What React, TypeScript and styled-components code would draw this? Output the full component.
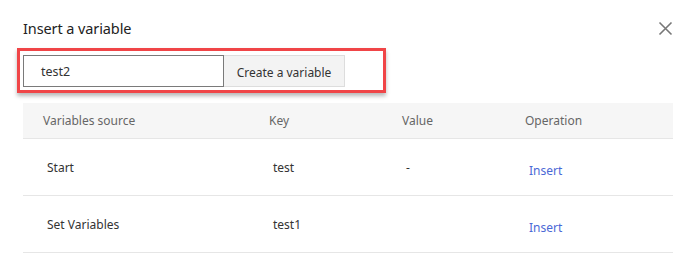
import * as React from 'react'
import styled, { createGlobalStyle } from 'styled-components'

const GlobalStyle = createGlobalStyle`
    html, body {
        margin: 0;
        padding: 0;
        background: #ffffff;
    }
    body {
        font-family: "Noto Sans", "Liberation Sans", sans-serif;
        color: #333;
    }
`

let Dialog = styled.div`
    width: 695px;
    height: 268px;
    box-sizing: border-box;
    padding: 15px 22px 0 23px;
    background: #fff;
`

let Header = styled.div`
    display: flex;
    align-items: center;
    justify-content: space-between;
    height: 26px;
`

let Title = styled.div`
    font-size: 14.5px;
    color: #222;
    letter-spacing: -0.1px;
`

let CloseButton = styled.div`
    width: 20px;
    height: 20px;
    display: flex;
    align-items: center;
    justify-content: center;
    margin-right: -2px;
`

let Highlight = styled.div`
    display: inline-flex;
    margin: 7px 0 0 -6px;
    padding: 4px 38px 3px 3px;
    border: 3px solid #f04547;
    box-shadow: 0 3px 4px rgba(0, 0, 0, 0.28);
`

let Input = styled.div`
    width: 201px;
    height: 32px;
    box-sizing: border-box;
    border: 1px solid #7a7a7a;
    display: flex;
    align-items: center;
    padding-left: 17px;
    font-size: 12.5px;
    color: #333;
`

let CreateButton = styled.div`
    width: 121px;
    height: 32px;
    box-sizing: border-box;
    border: 1px solid #ddd;
    border-left: none;
    background: #f3f3f3;
    display: flex;
    align-items: center;
    justify-content: center;
    padding-top: 3px;
    font-size: 12px;
    color: #333;
`

let Table = styled.div`
    margin-top: 10px;
    width: 650px;
`

let Row = styled.div<{ head?: boolean }>`
    display: grid;
    grid-template-columns: 226px 133px 123px 168px;
    height: ${p => (p.head ? '35px' : '56px')};
    align-items: center;
    background: ${p => (p.head ? '#f6f6f6' : 'transparent')};
    border-bottom: 1px solid #e6e6e6;
`

let Cell = styled.div<{ head?: boolean }>`
    padding-left: ${p => (p.head ? '20px' : '24px')};
    font-size: 12px;
    color: ${p => (p.head ? '#666' : '#333')};
`

let InsertLink = styled.span`
    color: #4a69d6;
    font-size: 12px;
    position: relative;
    top: 3px;
`

const rows = [
    { source: 'Start', key: 'test', value: '-' },
    { source: 'Set Variables', key: 'test1', value: '' },
]

export default function App() {
    return (
        <>
            <GlobalStyle />
            <Dialog>
                <Header>
                    <Title>Insert a variable</Title>
                    <CloseButton>
                        <svg width="15" height="15" viewBox="0 0 15 15">
                            <path d="M1.5 1.5 L13.5 13.5 M13.5 1.5 L1.5 13.5" stroke="#777" strokeWidth="1.6" fill="none" />
                        </svg>
                    </CloseButton>
                </Header>
                <Highlight>
                    <Input>test2</Input>
                    <CreateButton>Create a variable</CreateButton>
                </Highlight>
                <Table>
                    <Row head>
                        <Cell head>Variables source</Cell>
                        <Cell head>Key</Cell>
                        <Cell head>Value</Cell>
                        <Cell head>Operation</Cell>
                    </Row>
                    {rows.map(r => (
                        <Row key={r.key}>
                            <Cell>{r.source}</Cell>
                            <Cell>{r.key}</Cell>
                            <Cell>{r.value}</Cell>
                            <Cell><InsertLink>Insert</InsertLink></Cell>
                        </Row>
                    ))}
                </Table>
            </Dialog>
        </>
    )
}
